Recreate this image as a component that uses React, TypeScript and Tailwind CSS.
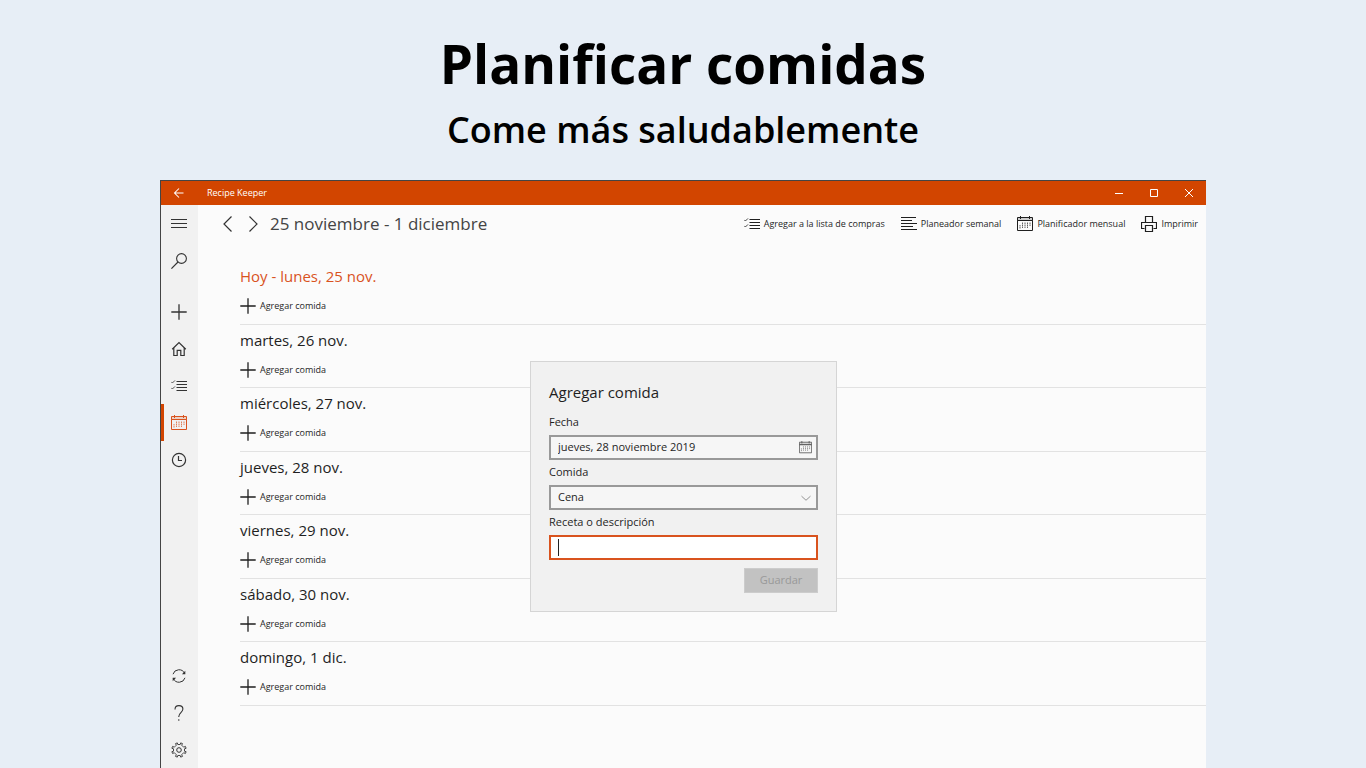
import { useState } from 'react'
import type { ReactNode } from 'react'

const DAYS = [
  'Hoy - lunes, 25 nov.',
  'martes, 26 nov.',
  'miércoles, 27 nov.',
  'jueves, 28 nov.',
  'viernes, 29 nov.',
  'sábado, 30 nov.',
  'domingo, 1 dic.',
]

const MEALS = ['Desayuno', 'Almuerzo', 'Cena']

function Icon({ children, className = 'w-4 h-4' }: { children: ReactNode; className?: string }) {
  return (
    <svg
      viewBox="0 0 16 16"
      fill="none"
      stroke="currentColor"
      aria-hidden="true"
      className={`shrink-0 ${className}`}
    >
      {children}
    </svg>
  )
}

function MenuIcon() {
  return (
    <Icon>
      <path d="M0 3.5h16M0 7.5h16M0 11.5h16" />
    </Icon>
  )
}

function SearchIcon() {
  return (
    <Icon>
      <circle cx="10.5" cy="5.5" r="4.9" strokeWidth="1.1" />
      <path d="M7 9 .4 15.6" strokeWidth="1.2" />
    </Icon>
  )
}

function PlusIcon() {
  return (
    <Icon>
      <path d="M8 .3v15.4M.3 8h15.4" strokeWidth="1.3" />
    </Icon>
  )
}

function HomeIcon() {
  return (
    <Icon>
      <path d="M1.2 8.3 8 1.6l6.8 6.7M2.8 7v7.5h3.4V9.4h3.6v5.1h3.4V7" strokeWidth="1.2" />
    </Icon>
  )
}

function ChecklistIcon() {
  return (
    <Icon>
      <path d="M5.5 3.5H16M5.5 6.5H16M5.5 9.5H16M5.5 12.5H16" />
      <path d="m.3 3.9 1.1 1.1L4 2.4M.3 9.9 1.4 11 4 8.4" strokeWidth="0.8" />
    </Icon>
  )
}

function CalendarIcon({ className }: { className?: string }) {
  return (
    <Icon className={className}>
      <path d="M.5 1.5h15v3H.5z" fill="currentColor" fillOpacity="0.2" />
      <path d="M.5 4.5h15v10H.5zM3.5 0v3M12.5 0v3" />
      <path
        d="M5.5 6.5v6M8 6.5v6M10.5 6.5v6M13 6.5v3.5M3 9v3.5"
        strokeDasharray="1.5 0.5"
        opacity="0.7"
      />
    </Icon>
  )
}

function ClockIcon() {
  return (
    <Icon>
      <circle cx="8" cy="8" r="6.6" strokeWidth="1.2" />
      <path d="M7.5 4v4.5H11" strokeWidth="1.2" />
    </Icon>
  )
}

function SyncIcon() {
  return (
    <Icon>
      <path d="M2 6.2A6.2 6.2 0 0 1 13.6 5.4M14 9.8A6.2 6.2 0 0 1 2.4 10.6" />
      <path d="M14.3 2.8v3.4h-3.4zM1.7 13.2V9.8h3.4z" fill="currentColor" stroke="none" />
    </Icon>
  )
}

function HelpIcon() {
  return (
    <Icon>
      <path d="M4 4.4C4 2 5.6.6 7.9.6c2.4 0 4 1.400 4 3.500 0 3.200-4.100 3.800-4.100 7.300v.6" strokeWidth="1.1" />
      <path d="M7.8 14.2v1.500" strokeWidth="1.1" />
    </Icon>
  )
}

function GearIcon() {
  return (
    <Icon>
      <path
        d="M6.8 2.500 6.300.9 4.500 1.600l.8 1.600-2 2-1.700-.8L.9 6.300l1.600.5v2.400l-1.600.5.7 1.800 1.700-.8 2 2-.8 1.700 1.800.7.500-1.600h2.400l.5 1.600 1.800-.7-.8-1.700 2-2 1.700.8.7-1.800-1.600-.5V6.800l1.600-.5-.7-1.900-1.700.8-2-2 .8-1.600-1.800-.7-.5 1.600z"
        strokeWidth="0.9"
        strokeLinejoin="round"
      />
      <circle cx="8" cy="8" r="2.3" />
    </Icon>
  )
}

function LinesIcon() {
  return (
    <Icon>
      <path d="M0 1.5h15M0 4.5h11M0 7.5h16M0 10.5h12M0 13.5h16" />
    </Icon>
  )
}

function PrinterIcon() {
  return (
    <Icon>
      <path d="M4.5 6.5v-6h7v6M3.5 12.5h-3v-6h15v6h-3M4.5 9.5h7v6h-7z" strokeWidth="1.2" />
    </Icon>
  )
}

function ChevronIcon({ d, className }: { d: string; className?: string }) {
  return (
    <Icon className={className}>
      <path d={d} strokeWidth="1.2" />
    </Icon>
  )
}

function NavButton({ label, active, children }: { label: string; active?: boolean; children: ReactNode }) {
  return (
    <button
      type="button"
      aria-label={label}
      className={`flex h-[37px] w-full items-center justify-center border-l-3 pr-1 ${
        active ? 'border-[#d24500] text-[#d9531e]' : 'border-transparent text-[#333333]'
      }`}
    >
      {children}
    </button>
  )
}

function ToolButton({ label, children }: { label: string; children: ReactNode }) {
  return (
    <button type="button" className="flex items-center gap-1 text-[9px] whitespace-nowrap text-[#1f1f1f]">
      {children}
      {label}
    </button>
  )
}

function DayRow({ title, today }: { title: string; today: boolean }) {
  return (
    <li className="flex flex-col items-start gap-2 border-b border-[#e2e2e2] pt-[3px] odd:h-16 even:h-[63px]">
      <h3 className={`text-[15px] leading-6 ${today ? 'text-[#d9531e]' : 'text-[#1f1f1f]'}`}>{title}</h3>
      <button type="button" className="flex h-5 items-center gap-1 text-[9px] text-[#1f1f1f]">
        <PlusIcon />
        Agregar comida
      </button>
    </li>
  )
}

function AddMealDialog() {
  const [meal, setMeal] = useState('Cena')
  const [recipe, setRecipe] = useState('')

  return (
    <form
      role="dialog"
      aria-labelledby="dialog-title"
      className="flex w-[307px] flex-col border border-[#d5d5d5] bg-[#f1f1f1] p-[18px] text-[11px] text-[#1f1f1f]"
    >
      <h2 id="dialog-title" className="text-[15px] leading-6">
        Agregar comida
      </h2>

      <label htmlFor="date" className="mt-2 leading-5">
        Fecha
      </label>
      <div className="mt-[3px] flex h-[25px] items-center border-2 border-[#999999] bg-[#f6f6f6] pr-1">
        <input
          id="date"
          readOnly
          value="jueves, 28 noviembre 2019"
          className="min-w-0 flex-1 bg-transparent pl-[7px] outline-none"
        />
        <button type="button" aria-label="Abrir calendario" className="text-[#555555]">
          <CalendarIcon className="w-[13px] h-[13px]" />
        </button>
      </div>

      <label htmlFor="meal" className="mt-[2px] leading-5">
        Comida
      </label>
      <div className="relative mt-[3px]">
        <select
          id="meal"
          value={meal}
          onChange={(e) => setMeal(e.target.value)}
          className="block h-[25px] w-full appearance-none border-2 border-[#999999] bg-[#f6f6f6] pl-[7px] outline-none"
        >
          {MEALS.map((m) => (
            <option key={m}>{m}</option>
          ))}
        </select>
        <span className="pointer-events-none absolute inset-y-0 right-[6px] flex items-center text-[#888888]">
          <ChevronIcon d="M2 5.5 8 11l6-5.5" className="w-3 h-3" />
        </span>
      </div>

      <label htmlFor="recipe" className="mt-[2px] leading-5">
        Receta o descripción
      </label>
      <div className="relative mt-[3px]">
        <input
          id="recipe"
          value={recipe}
          onChange={(e) => setRecipe(e.target.value)}
          className="peer block h-[25px] w-full border-2 border-[#d9531e] bg-white px-2 outline-none"
        />
        {/* caret shown until the field gets focus */}
        <span className="pointer-events-none absolute inset-y-1 left-[9px] w-px bg-[#222222] peer-focus:hidden" />
      </div>

      <button
        type="submit"
        disabled
        className="mt-2 h-[25px] w-[74px] self-end border border-[#cccccc] bg-[#c2c2c2] text-[#999999]"
      >
        Guardar
      </button>
    </form>
  )
}

export default function App() {
  return (
    <div className="flex min-h-screen flex-col bg-[#e7eef6] px-40 font-['Open_Sans','Noto_Sans',sans-serif]">
      <header className="flex h-[180px] shrink-0 flex-col items-center pt-8 text-black">
        <h1 className="text-[53px] leading-16 font-bold whitespace-nowrap">Planificar comidas</h1>
        <p className="mt-2 text-[36px] leading-13 font-semibold whitespace-nowrap">Come más saludablemente</p>
      </header>

      <div className="flex flex-1 flex-col border-t border-l border-[#444444] bg-[#fbfbfb]">
        {/* Title bar */}
        <div className="flex h-6 items-center bg-[#d24500] text-white">
          <button type="button" aria-label="Atrás" className="flex w-9 justify-center">
            <Icon className="w-3 h-3">
              <path d="M14 8H2M8 2 2 8l6 6" strokeWidth="1.4" />
            </Icon>
          </button>
          <span className="ml-[10px] flex-1 text-[9px]">Recipe Keeper</span>
          <button type="button" aria-label="Minimizar" className="flex w-[35px] justify-center">
            <Icon className="w-2 h-2">
              <path d="M0 9h16" strokeWidth="2" />
            </Icon>
          </button>
          <button type="button" aria-label="Maximizar" className="flex w-[35px] justify-center">
            <Icon className="w-2 h-2">
              <path d="M1 1h14v14H1z" strokeWidth="2" />
            </Icon>
          </button>
          <button type="button" aria-label="Cerrar" className="flex w-[35px] justify-center">
            <Icon className="w-2 h-2">
              <path d="m0 0 16 16M16 0 0 16" strokeWidth="2" />
            </Icon>
          </button>
        </div>

        <div className="relative flex flex-1">
          {/* Sidebar */}
          <nav className="flex w-[37px] shrink-0 flex-col bg-[#f1f1f1]">
            <NavButton label="Menú">
              <MenuIcon />
            </NavButton>
            <NavButton label="Buscar">
              <SearchIcon />
            </NavButton>
            <div className="mt-[14px]">
              <NavButton label="Agregar receta">
                <PlusIcon />
              </NavButton>
              <NavButton label="Inicio">
                <HomeIcon />
              </NavButton>
              <NavButton label="Lista de compras">
                <ChecklistIcon />
              </NavButton>
              <NavButton label="Planificador" active>
                <CalendarIcon />
              </NavButton>
              <NavButton label="Recientes">
                <ClockIcon />
              </NavButton>
            </div>
            <div className="mt-auto">
              <NavButton label="Sincronizar">
                <SyncIcon />
              </NavButton>
              <NavButton label="Ayuda">
                <HelpIcon />
              </NavButton>
              <NavButton label="Configuración">
                <GearIcon />
              </NavButton>
            </div>
          </nav>

          <main className="min-w-0 flex-1">
            <div className="flex h-[38px] items-center pr-2 pl-[22px] text-[#333333]">
              <button type="button" aria-label="Semana anterior">
                <ChevronIcon d="M11.5.5 4 8l7.5 7.5" />
              </button>
              <button type="button" aria-label="Semana siguiente" className="ml-[9px]">
                <ChevronIcon d="M4.5.5 12 8l-7.5 7.5" />
              </button>
              <h2 className="ml-[9px] flex-1 text-[17px] whitespace-nowrap text-[#444444]">
                25 noviembre - 1 diciembre
              </h2>
              <div className="flex gap-4">
                <ToolButton label="Agregar a la lista de compras">
                  <ChecklistIcon />
                </ToolButton>
                <ToolButton label="Planeador semanal">
                  <LinesIcon />
                </ToolButton>
                <ToolButton label="Planificador mensual">
                  <CalendarIcon />
                </ToolButton>
                <ToolButton label="Imprimir">
                  <PrinterIcon />
                </ToolButton>
              </div>
            </div>

            <ul className="mt-[18px] ml-[42px]">
              {DAYS.map((day, i) => (
                <DayRow key={day} title={day} today={i === 0} />
              ))}
            </ul>
          </main>

          {/* Dialog */}
          <div className="absolute inset-0 flex items-center justify-center">
            <AddMealDialog />
          </div>
        </div>
      </div>
    </div>
  )
}
